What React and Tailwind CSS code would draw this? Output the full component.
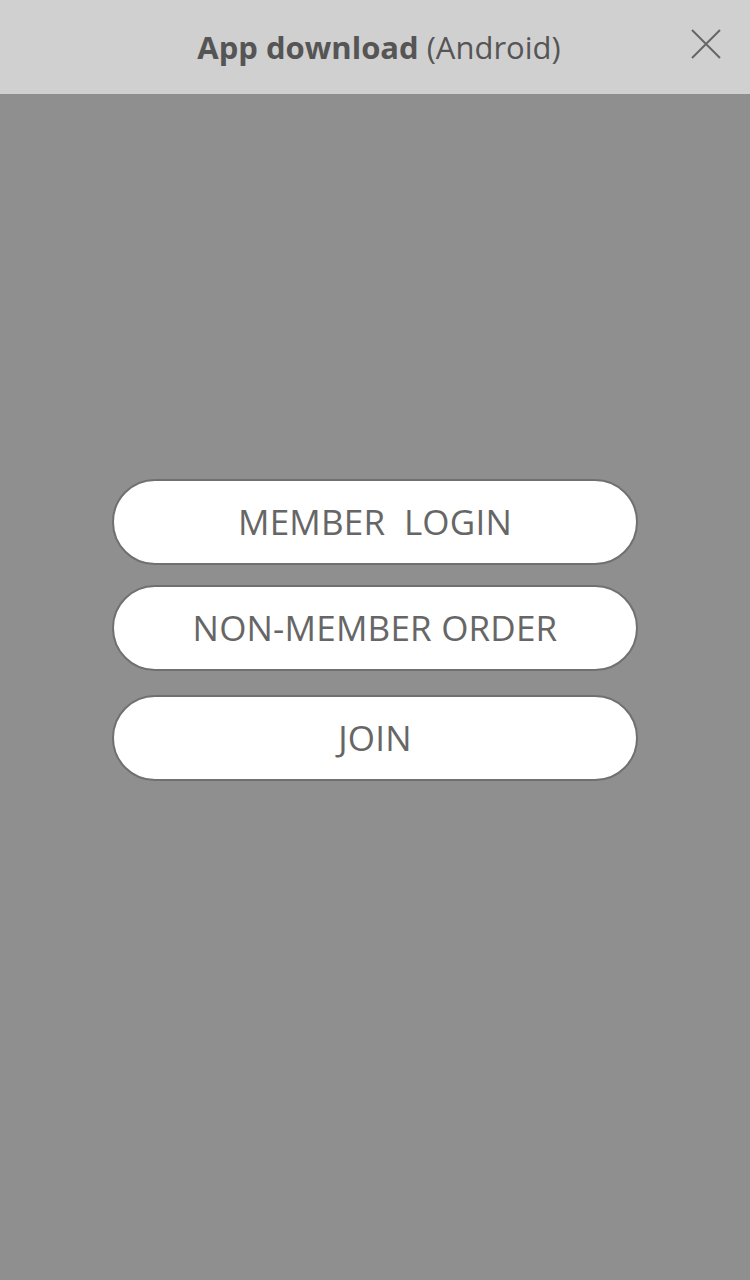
import { X } from "lucide-react";

const buttons = [
  { label: "MEMBER  LOGIN", mt: "mt-[479px]" },
  { label: "NON-MEMBER ORDER", mt: "mt-[20px]" },
  { label: "JOIN", mt: "mt-[24px]" },
];

export default function App() {
  return (
    <div className="w-[750px] h-[1280px] bg-[#8f8f8f] flex flex-col font-['Open_Sans',sans-serif]">
      <header className="relative h-[94px] bg-[#d0d0d0] flex items-center justify-center shrink-0">
        <h1 className="text-[31px] text-[#555555] leading-none pl-[8px]">
          <span className="font-bold">App download</span> (Android)
        </h1>
        <button className="absolute right-[26px] top-[26px] text-[#666666]">
          <svg width="36" height="36" viewBox="0 0 36 36" fill="none" stroke="currentColor" strokeWidth="2">
            <path d="M4 4 L32 32 M32 4 L4 32" />
          </svg>
        </button>
      </header>

      <div className="flex flex-col -mt-[94px] pl-[112px]">
        {buttons.map((b) => (
          <button
            key={b.label}
            className={`${b.mt} w-[526px] h-[86px] rounded-full bg-white border-2 border-[#707070] text-[#666666] text-[35px] tracking-[0.2px] whitespace-pre flex items-center justify-center`}
          >
            {b.label}
          </button>
        ))}
      </div>
    </div>
  );
}
